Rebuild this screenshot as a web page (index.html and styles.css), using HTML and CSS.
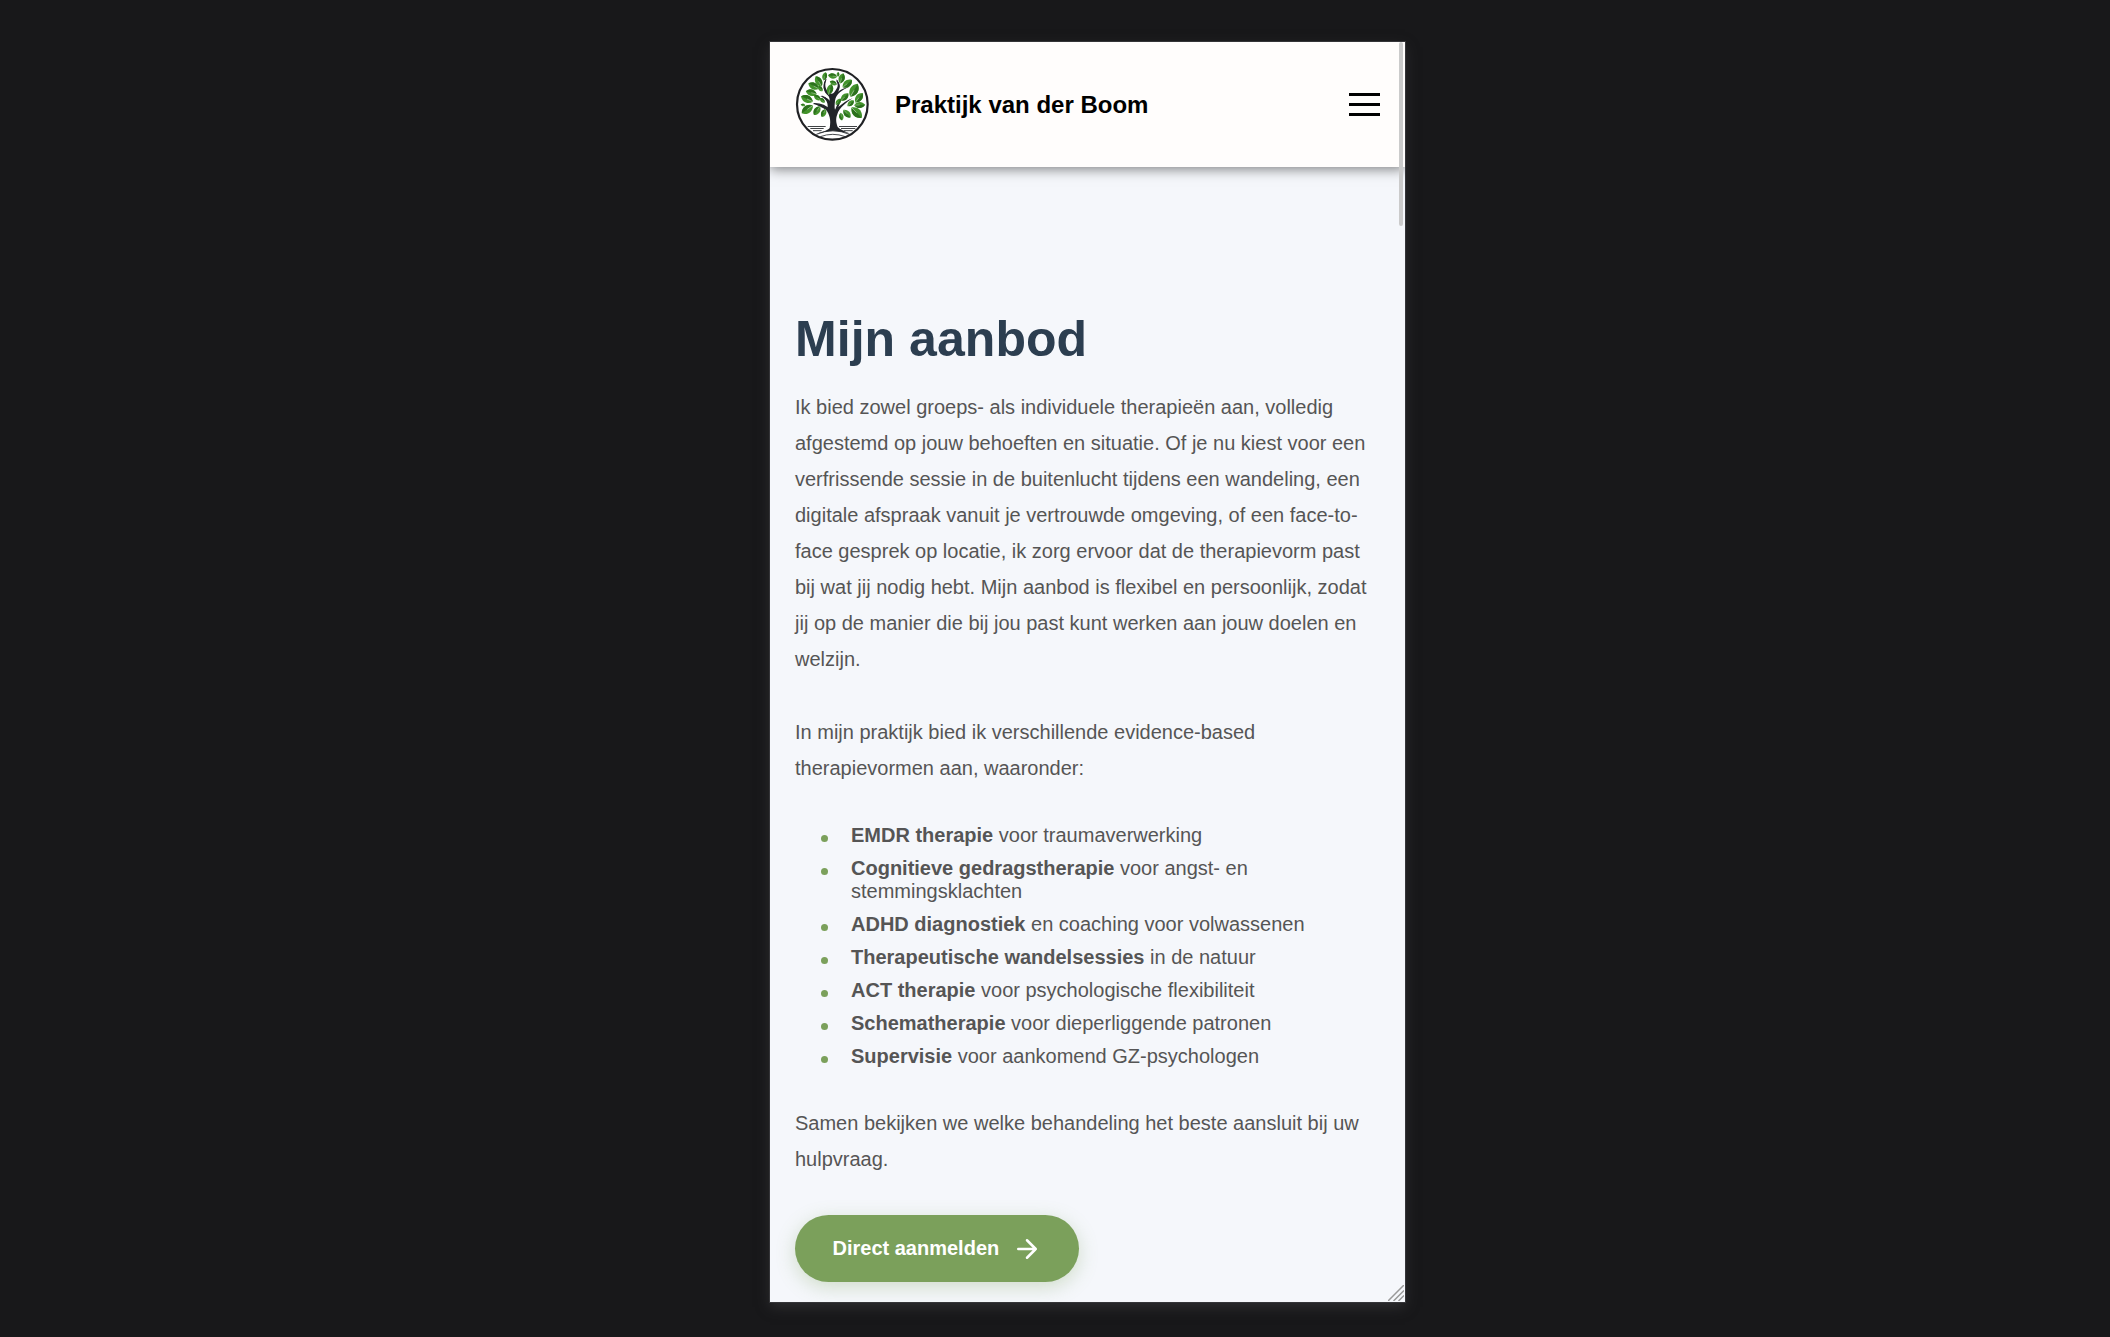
FILE: index.html
```html
<!DOCTYPE html>
<html lang="nl">
<head>
<meta charset="utf-8">
<title>Praktijk van der Boom</title>
<link rel="stylesheet" href="styles.css">
</head>
<body>
<div class="device">
  <header class="topbar">
    <svg class="logo" viewBox="30 27 225 225" aria-hidden="true">
      <defs>
        <g id="leaf"><path d="M0-18C13-9 14 8 0 18C-14 8-13-9 0-18Z" fill="#43932c"/><path d="M0-17C13-8 13 7 0 17Z" fill="#2c711d"/><path d="M0 0V18" stroke="#d5e8cf" stroke-width="1.3"/></g>
      </defs>
      <circle cx="142" cy="139" r="106" fill="#fff" stroke="#202124" stroke-width="6.5"/>
      <g fill="none" stroke="#222528" stroke-width="2.600">
        <path d="M68 205.500H122M162 205.500H216M76 211.500H116M168 211.500H211M84 218H110M176 218H203"/>
      </g>
      <path d="M134 210C139 186 133 169 124 157C113 148 99 144 84 136C102 138 116 142 128 149C130 132 121 121 105 114C116 115 127 120 134 128C134 118 131 114 125 109C111 94 115 72 124 62C118 82 121 94 132 104C142 110 145 107 151 98C161 85 160 77 154 63C166 77 168 87 159 101C174 90 185 88 193 86C172 95 153 107 150 128C149 140 148 148 150 155C157 142 158 130 170 119C166 132 164 139 160 147C175 136 186 126 203 121C184 133 162 150 157 169C151 184 154 195 158 207C167 216 181 220 193 226C174 223 160 218 145 218C130 218 114 223 94 227C112 221 127 219 134 210Z" fill="#212429"/>
      <path d="M94 229Q143 208 194 229M106 236Q143 222 181 236" fill="none" stroke="#212429" stroke-width="2.500"/>
      <g fill="none" stroke="#212429" stroke-width="3.500">
        <path d="M86 137Q117 136 137 158M110 114Q134 121 139 150M123 64Q109 91 130 108L142 125M155 67Q169 88 151 107"/>
      </g>
      <g>
        <use href="#leaf" transform="translate(101 70) rotate(-30)"/>
        <use href="#leaf" transform="translate(119 55) rotate(15) scale(.7)"/>
        <use href="#leaf" transform="translate(143 54) rotate(-80) scale(.78)"/>
        <use href="#leaf" transform="translate(159 49) scale(.4)"/>
        <use href="#leaf" transform="translate(170 61) rotate(18) scale(.9)"/>
        <use href="#leaf" transform="translate(145 75) rotate(-65) scale(.65)"/>
        <use href="#leaf" transform="translate(187 77) rotate(52)"/>
        <use href="#leaf" transform="translate(86 84) rotate(-62)"/>
        <use href="#leaf" transform="translate(135 94) rotate(15) scale(.93)"/>
        <use href="#leaf" transform="translate(106 92) rotate(-40) scale(.55)"/>
        <use href="#leaf" transform="translate(207 97) rotate(30) scale(1.25)"/>
        <use href="#leaf" transform="translate(79 104) rotate(-75) scale(.95)"/>
        <use href="#leaf" transform="translate(97 119) rotate(-55) scale(.7)"/>
        <use href="#leaf" transform="translate(112 127) rotate(-45) scale(.55)"/>
        <use href="#leaf" transform="translate(66 123) rotate(-65) scale(1.1)"/>
        <use href="#leaf" transform="translate(179 117) rotate(45) scale(.87)"/>
        <use href="#leaf" transform="translate(222 119) rotate(38)"/>
        <use href="#leaf" transform="translate(54 141) rotate(-80) scale(.4)"/>
        <use href="#leaf" transform="translate(160 131) rotate(40) scale(.65)"/>
        <use href="#leaf" transform="translate(197 136) rotate(48) scale(.7)"/>
        <use href="#leaf" transform="translate(67 154) rotate(-125) scale(1.15)"/>
        <use href="#leaf" transform="translate(96 158) rotate(-145) scale(.9)"/>
        <use href="#leaf" transform="translate(116 165) rotate(-155) scale(.75)"/>
        <use href="#leaf" transform="translate(224 141) rotate(88) scale(.92)"/>
        <use href="#leaf" transform="translate(215 164) rotate(135) scale(1.22)"/>
        <use href="#leaf" transform="translate(186 167) rotate(138) scale(.88)"/>
        <use href="#leaf" transform="translate(169 176) rotate(170) scale(.65)"/>
      </g>
    </svg>
    <span class="brand">Praktijk van der Boom</span>
    <div class="menu"><span></span><span></span><span></span></div>
  </header>
  <main class="content">
    <h1>Mijn aanbod</h1>
    <p class="intro">Ik bied zowel groeps- als individuele therapieën aan, volledig afgestemd op jouw behoeften en situatie. Of je nu kiest voor een verfrissende sessie in de buitenlucht tijdens een wandeling, een digitale afspraak vanuit je vertrouwde omgeving, of een face-to-face gesprek op locatie, ik zorg ervoor dat de therapievorm past bij wat jij nodig hebt. Mijn aanbod is flexibel en persoonlijk, zodat jij op de manier die bij jou past kunt werken aan jouw doelen en welzijn.</p>
    <p>In mijn praktijk bied ik verschillende evidence-based therapievormen aan, waaronder:</p>
    <ul>
      <li><strong>EMDR therapie</strong> voor traumaverwerking</li>
      <li><strong>Cognitieve gedragstherapie</strong> voor angst- en stemmingsklachten</li>
      <li><strong>ADHD diagnostiek</strong> en coaching voor volwassenen</li>
      <li><strong>Therapeutische wandelsessies</strong> in de natuur</li>
      <li><strong>ACT therapie</strong> voor psychologische flexibiliteit</li>
      <li><strong>Schematherapie</strong> voor dieperliggende patronen</li>
      <li><strong>Supervisie</strong> voor aankomend GZ-psychologen</li>
    </ul>
    <p>Samen bekijken we welke behandeling het beste aansluit bij uw hulpvraag.</p>
    <a class="cta">Direct aanmelden
      <svg viewBox="0 0 24 24" aria-hidden="true"><path d="M5 12H19M12 5L19 12L12 19" fill="none" stroke="#fff" stroke-width="2" stroke-linecap="round" stroke-linejoin="round"/></svg>
    </a>
  </main>
  <div class="scroll-thumb"></div>
  <svg class="grip" viewBox="0 0 16 16" aria-hidden="true"><path d="M0 16L16 0M5.500 16L16 5.500M10.500 16L16 10.500" stroke="#999" stroke-width="1.500"/></svg>
</div>
</body>
</html>
```
FILE: styles.css
```css
* { box-sizing: border-box; }
body {
  margin: 0;
  height: 1337px;
  padding-top: 42px;
  overflow: hidden;
  background: #18181a;
  font-family: "Liberation Sans", Arial, sans-serif;
  font-size: 20px;
  color: #555;
}
.device {
  position: relative;
  width: 635px;
  height: 1260px;
  margin-left: 770px;
  background: #f5f7fb;
  box-shadow: 0 0 0 1px #353538, 0 5px 12px #2e2e30;
}
.topbar {
  position: relative;
  display: flex;
  align-items: center;
  height: 125px;
  padding: 0 25px;
  background: #fffdfc;
  box-shadow: 0 2px 12px rgba(0, 0, 0, .5);
  clip-path: inset(0 0 -20px 0);
}
.logo { width: 75px; height: 75px; }
.brand {
  margin-left: 25px;
  font-size: 24px;
  font-weight: bold;
  color: #000;
}
.menu {
  display: flex;
  flex-direction: column;
  gap: 7px;
  width: 31px;
  margin-left: auto;
}
.menu span { height: 3px; background: #000; }
.content { padding: 144px 25px 0; }
h1 {
  margin: 0 0 21px;
  font-size: 50px;
  line-height: 57px;
  letter-spacing: .05px;
  color: #2c3e50;
}
p {
  margin: 0 0 38px;
  line-height: 36px;
}
.intro { margin-bottom: 37px; }
ul {
  margin: 0 0 37px;
  padding: 0 0 0 27px;
  list-style: none;
}
li {
  display: block;
  position: relative;
  padding-left: 29px;
  line-height: 23px;
}
li + li { margin-top: 10px; }
li::before {
  content: "";
  position: absolute;
  left: -1px;
  top: 11px;
  width: 7px;
  height: 7px;
  border-radius: 50%;
  background: #7ba05b;
}
.cta {
  display: flex;
  align-items: center;
  width: 284px;
  height: 67px;
  padding-left: 37.5px;
  gap: 12.5px;
  border-radius: 34px;
  background: #7ba05b;
  box-shadow: 0 5px 19px rgba(123, 160, 91, .3);
  color: #fff;
  font-weight: bold;
}
.cta svg { width: 30px; height: 30px; }
.scroll-thumb {
  position: absolute;
  top: 0;
  right: 2px;
  width: 4px;
  height: 184px;
  border-radius: 2px;
  background: #cbcbcb;
}
.grip {
  position: absolute;
  right: 1px;
  bottom: 1px;
  width: 16px;
  height: 16px;
}
```
